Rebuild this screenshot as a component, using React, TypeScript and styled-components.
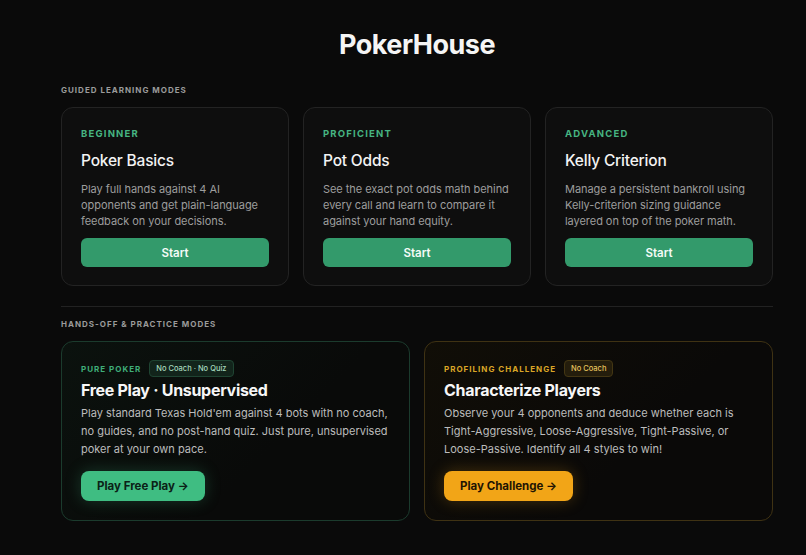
import React from "react";
import styled, { createGlobalStyle } from "styled-components";

type Tone = "green" | "amber";

const GlobalStyle = createGlobalStyle`
  html, body {
    margin: 0;
    padding: 0;
    background: #0a0a0a;
  }
  body {
    font-family: Inter, "Noto Sans", "Liberation Sans", sans-serif;
    color: #f2f2f2;
    -webkit-font-smoothing: antialiased;
  }
`;

const guided = [
  {
    level: "BEGINNER",
    title: "Poker Basics",
    text: "Play full hands against 4 AI opponents and get plain-language feedback on your decisions.",
  },
  {
    level: "PROFICIENT",
    title: "Pot Odds",
    text: "See the exact pot odds math behind every call and learn to compare it against your hand equity.",
  },
  {
    level: "ADVANCED",
    title: "Kelly Criterion",
    text: "Manage a persistent bankroll using Kelly-criterion sizing guidance layered on top of the poker math.",
  },
];

const practice: {
  tone: Tone;
  kicker: string;
  badge: string;
  title: string;
  text: string;
  action: string;
}[] = [
  {
    tone: "green",
    kicker: "PURE POKER",
    badge: "No Coach · No Quiz",
    title: "Free Play · Unsupervised",
    text: "Play standard Texas Hold'em against 4 bots with no coach, no guides, and no post-hand quiz. Just pure, unsupervised poker at your own pace.",
    action: "Play Free Play →",
  },
  {
    tone: "amber",
    kicker: "PROFILING CHALLENGE",
    badge: "No Coach",
    title: "Characterize Players",
    text: "Observe your 4 opponents and deduce whether each is Tight-Aggressive, Loose-Aggressive, Tight-Passive, or Loose-Passive. Identify all 4 styles to win!",
    action: "Play Challenge →",
  },
];

const App: React.FC = () => {
  return (
    <Page>
      <GlobalStyle />
      <Logo>PokerHouse</Logo>

      <SectionLabel>GUIDED LEARNING MODES</SectionLabel>
      <GuidedGrid>
        {guided.map((g) => (
          <GuidedCard key={g.level}>
            <Level>{g.level}</Level>
            <CardTitle>{g.title}</CardTitle>
            <CardText>{g.text}</CardText>
            <StartButton>Start</StartButton>
          </GuidedCard>
        ))}
      </GuidedGrid>

      <Divider />

      <SectionLabel>HANDS-OFF &amp; PRACTICE MODES</SectionLabel>
      <PracticeGrid>
        {practice.map((p) => (
          <PracticeCard key={p.kicker} $tone={p.tone}>
            <KickerRow>
              <Kicker $tone={p.tone}>{p.kicker}</Kicker>
              <Badge $tone={p.tone}>{p.badge}</Badge>
            </KickerRow>
            <PracticeTitle>{p.title}</PracticeTitle>
            <PracticeText>{p.text}</PracticeText>
            <PlayButton $tone={p.tone}>{p.action}</PlayButton>
          </PracticeCard>
        ))}
      </PracticeGrid>
    </Page>
  );
};

const Page = styled.div`
  width: 712px;
  margin-left: 61px;
  padding: 28px 0 30px;
  display: flex;
  flex-direction: column;
`;

const Logo = styled.h1`
  margin: 0 0 22px;
  text-align: center;
  font-size: 27px;
  line-height: 34px;
  font-weight: 700;
  letter-spacing: -0.5px;
  color: #f5f5f5;
`;

const SectionLabel = styled.div`
  font-size: 8px;
  line-height: 12px;
  font-weight: 700;
  letter-spacing: 1px;
  color: #9b9b9b;
  margin-bottom: 11px;
`;

const GuidedGrid = styled.div`
  display: grid;
  grid-template-columns: repeat(3, 1fr);
  gap: 14px;
`;

const GuidedCard = styled.div`
  display: flex;
  flex-direction: column;
  padding: 20px 19px 18px;
  background: #0e0e0e;
  border: 1px solid #232323;
  border-radius: 12px;
`;

const Level = styled.div`
  font-size: 9.5px;
  line-height: 12px;
  font-weight: 700;
  letter-spacing: 1.2px;
  color: #46b582;
  margin-bottom: 10px;
`;

const CardTitle = styled.div`
  font-size: 15.5px;
  line-height: 22px;
  font-weight: 500;
  letter-spacing: -0.2px;
  color: #f3f3f3;
  margin-bottom: 9px;
`;

const CardText = styled.p`
  margin: 0 0 9px;
  font-size: 11px;
  line-height: 16px;
  letter-spacing: -0.05px;
  color: #9d9d9d;
  min-height: 48px;
`;

const StartButton = styled.button`
  height: 29px;
  border: none;
  border-radius: 6px;
  background: #339a6b;
  color: #f4fbf7;
  font-family: inherit;
  font-size: 11.5px;
  font-weight: 600;
  cursor: pointer;
`;

const Divider = styled.hr`
  margin: 20px 0 11px;
  border: none;
  border-top: 1px solid #222222;
`;

const PracticeGrid = styled.div`
  display: grid;
  grid-template-columns: 1fr 1fr;
  gap: 14px;
`;

const PracticeCard = styled.div<{ $tone: Tone }>`
  display: flex;
  flex-direction: column;
  align-items: flex-start;
  padding: 18px 19px 19px;
  border-radius: 12px;
  border: 1px solid
    ${(p) => (p.$tone === "green" ? "#1b3b2d" : "#3f3213")};
  background: ${(p) =>
    p.$tone === "green"
      ? "linear-gradient(135deg, #0b120e 0%, #090a09 60%)"
      : "linear-gradient(135deg, #110e07 0%, #0a0908 60%)"};
`;

const KickerRow = styled.div`
  display: flex;
  align-items: center;
  gap: 8px;
  margin-bottom: 2px;
`;

const Kicker = styled.span<{ $tone: Tone }>`
  font-size: 8px;
  font-weight: 700;
  letter-spacing: 1px;
  color: ${(p) => (p.$tone === "green" ? "#3fae79" : "#dba626")};
`;

const Badge = styled.span<{ $tone: Tone }>`
  height: 15px;
  padding: 0 6px;
  display: inline-flex;
  align-items: center;
  border-radius: 4px;
  font-size: 7.5px;
  font-weight: 500;
  color: ${(p) => (p.$tone === "green" ? "#a6d9bd" : "#e5c35c")};
  background: ${(p) => (p.$tone === "green" ? "#12241b" : "#241d0c")};
  border: 1px solid ${(p) => (p.$tone === "green" ? "#1f4432" : "#433613")};
`;

const PracticeTitle = styled.div`
  font-size: 16px;
  line-height: 22px;
  font-weight: 700;
  letter-spacing: -0.3px;
  color: #f6f6f6;
  margin-bottom: 3px;
`;

const PracticeText = styled.p`
  margin: 0 0 13px;
  font-size: 11px;
  line-height: 18px;
  color: #bcbcbc;
`;

const PlayButton = styled.button<{ $tone: Tone }>`
  height: 30px;
  padding: 0 16px;
  border: none;
  border-radius: 8px;
  background: ${(p) => (p.$tone === "green" ? "#3fbd82" : "#f2a517")};
  color: ${(p) => (p.$tone === "green" ? "#0b2117" : "#1f1403")};
  box-shadow: 0 0 16px
    ${(p) =>
      p.$tone === "green" ? "rgba(63, 189, 130, 0.25)" : "rgba(242, 165, 23, 0.25)"};
  font-family: inherit;
  font-size: 11.5px;
  font-weight: 700;
  cursor: pointer;
`;

export default App;
